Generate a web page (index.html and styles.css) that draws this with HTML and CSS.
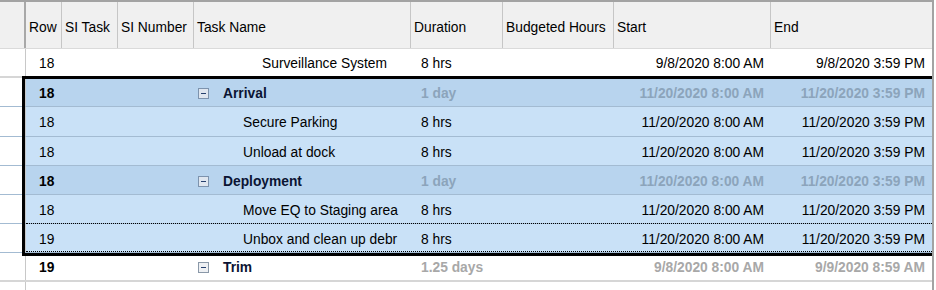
FILE: index.html
```html
<!DOCTYPE html>
<html>
<head>
<meta charset="utf-8">
<link rel="stylesheet" href="styles.css">
</head>
<body>
<div class="grid">
  <div class="hdr">
    <div class="gut"></div>
    <div class="c c-row">Row</div>
    <div class="c c-sit">SI Task</div>
    <div class="c c-sin">SI Number</div>
    <div class="c c-name">Task Name</div>
    <div class="c c-dur">Duration</div>
    <div class="c c-bud">Budgeted Hours</div>
    <div class="c c-start">Start</div>
    <div class="c c-end">End</div>
  </div>

  <div class="row">
    <div class="gut"></div>
    <div class="c c-row num">18</div>
    <div class="c c-sit"></div>
    <div class="c c-sin"></div>
    <div class="c c-name lvl2">Surveillance System</div>
    <div class="c c-dur dur">8 hrs</div>
    <div class="c c-bud"></div>
    <div class="c c-start date">9/8/2020 8:00 AM</div>
    <div class="c c-end date">9/8/2020 3:59 PM</div>
  </div>

  <div class="row sel grp">
    <div class="gut"></div>
    <div class="c c-row num">18</div>
    <div class="c c-sit"></div>
    <div class="c c-sin"></div>
    <div class="c c-name lvl0"><svg class="exp" width="11" height="11" viewBox="0 0 11 11"><rect x="0.5" y="0.5" width="10" height="10" fill="#dfe6ef" stroke="#7d93ad"/><rect x="3" y="5" width="5" height="1" fill="#26406e"/></svg><span>Arrival</span></div>
    <div class="c c-dur dur">1 day</div>
    <div class="c c-bud"></div>
    <div class="c c-start date">11/20/2020 8:00 AM</div>
    <div class="c c-end date">11/20/2020 3:59 PM</div>
  </div>

  <div class="row sel tall">
    <div class="gut"></div>
    <div class="c c-row num">18</div>
    <div class="c c-sit"></div>
    <div class="c c-sin"></div>
    <div class="c c-name lvl1">Secure Parking</div>
    <div class="c c-dur dur">8 hrs</div>
    <div class="c c-bud"></div>
    <div class="c c-start date">11/20/2020 8:00 AM</div>
    <div class="c c-end date">11/20/2020 3:59 PM</div>
  </div>

  <div class="row sel">
    <div class="gut"></div>
    <div class="c c-row num">18</div>
    <div class="c c-sit"></div>
    <div class="c c-sin"></div>
    <div class="c c-name lvl1">Unload at dock</div>
    <div class="c c-dur dur">8 hrs</div>
    <div class="c c-bud"></div>
    <div class="c c-start date">11/20/2020 8:00 AM</div>
    <div class="c c-end date">11/20/2020 3:59 PM</div>
  </div>

  <div class="row sel grp">
    <div class="gut"></div>
    <div class="c c-row num">18</div>
    <div class="c c-sit"></div>
    <div class="c c-sin"></div>
    <div class="c c-name lvl0"><svg class="exp" width="11" height="11" viewBox="0 0 11 11"><rect x="0.5" y="0.5" width="10" height="10" fill="#dfe6ef" stroke="#7d93ad"/><rect x="3" y="5" width="5" height="1" fill="#26406e"/></svg><span>Deployment</span></div>
    <div class="c c-dur dur">1 day</div>
    <div class="c c-bud"></div>
    <div class="c c-start date">11/20/2020 8:00 AM</div>
    <div class="c c-end date">11/20/2020 3:59 PM</div>
  </div>

  <div class="row sel">
    <div class="gut"></div>
    <div class="c c-row num">18</div>
    <div class="c c-sit"></div>
    <div class="c c-sin"></div>
    <div class="c c-name lvl1">Move EQ to Staging area</div>
    <div class="c c-dur dur">8 hrs</div>
    <div class="c c-bud"></div>
    <div class="c c-start date">11/20/2020 8:00 AM</div>
    <div class="c c-end date">11/20/2020 3:59 PM</div>
  </div>

  <div class="row sel focus">
    <div class="gut"></div>
    <div class="c c-row num">19</div>
    <div class="c c-sit"></div>
    <div class="c c-sin"></div>
    <div class="c c-name lvl1">Unbox and clean up debr</div>
    <div class="c c-dur dur">8 hrs</div>
    <div class="c c-bud"></div>
    <div class="c c-start date">11/20/2020 8:00 AM</div>
    <div class="c c-end date">11/20/2020 3:59 PM</div>
  </div>

  <div class="row grp">
    <div class="gut"></div>
    <div class="c c-row num">19</div>
    <div class="c c-sit"></div>
    <div class="c c-sin"></div>
    <div class="c c-name lvl0"><svg class="exp" width="11" height="11" viewBox="0 0 11 11"><rect x="0.5" y="0.5" width="10" height="10" fill="#eef0f3" stroke="#8a98a8"/><rect x="3" y="5" width="5" height="1" fill="#26406e"/></svg><span>Trim</span></div>
    <div class="c c-dur dur">1.25 days</div>
    <div class="c c-bud"></div>
    <div class="c c-start date">9/8/2020 8:00 AM</div>
    <div class="c c-end date">9/9/2020 8:59 AM</div>
  </div>

  <div class="row last">
    <div class="gut"></div>
  </div>

  <div class="selbox"></div>
</div>
</body>
</html>
```

FILE: styles.css
```css
html, body {
  margin: 0;
  padding: 0;
  background: #ffffff;
}

body {
  width: 936px;
  height: 290px;
  overflow: hidden;
  font-family: "Liberation Sans", Arial, sans-serif;
  font-size: 13.8px;
  color: #000;
}

.grid {
  position: relative;
  width: 934px;
  height: 290px;
  box-sizing: border-box;
  border-top: 2px solid #a3a3a3;
  border-right: 2px solid #a3a3a3;
  overflow: hidden;
}

.hdr {
  display: flex;
  height: 47px;
  box-sizing: border-box;
  background: #f0f0f0;
  border-bottom: 1px solid #dadada;
}

.hdr .gut {
  width: 26px;
  border-right: 2px solid #a8a8a8;
  box-sizing: border-box;
  flex: none;
}

.hdr .c {
  display: flex;
  align-items: center;
  padding-left: 3px;
  padding-top: 4px;
  border-right: 1px solid #c6c6c6;
  box-sizing: border-box;
  white-space: nowrap;
  color: #000;
}

.hdr .c-end {
  border-right: none;
}

.c {
  flex: none;
  box-sizing: border-box;
  white-space: nowrap;
  overflow: hidden;
}

.c-row { width: 36px; }
.c-sit { width: 56px; }
.c-sin { width: 76px; }
.c-name { width: 217px; }
.c-dur { width: 92px; }
.c-bud { width: 111px; }
.c-start { width: 157px; }
.c-end { flex: 1 1 auto; }

.row {
  display: flex;
  height: 29px;
  box-sizing: border-box;
  border-bottom: 2px solid #d6d6d6;
}

.row.tall {
  height: 30px;
}

.row .gut {
  width: 26px;
  flex: none;
  box-sizing: border-box;
  border-right: 1px solid #c8c8c8;
  background: #fff;
}

.row .c {
  display: flex;
  align-items: center;
  padding-top: 2px;
}

.row.sel {
  border-bottom: 1px solid #a3bbd2;
}

.row.sel .c {
  background: #c9e1f7;
}

.row.sel.grp .c {
  background: #b8d4ee;
}

.row.last {
  border-bottom: none;
  height: 20px;
}

.num {
  padding-left: 13px;
}

.grp .num {
  font-weight: bold;
}

.lvl0 {
  padding-left: 4px;
  font-weight: bold;
  color: #0b1433;
}

.lvl0 .exp {
  flex: none;
  margin-right: 14px;
}

.lvl1 {
  padding-left: 49px;
}

.lvl2 {
  padding-left: 68px;
}

.dur {
  padding-left: 10px;
}

.date {
  justify-content: flex-end;
  padding-right: 7px;
}

.grp .dur,
.grp .date {
  font-weight: bold;
  color: #a8a8a8;
}

.sel.grp .dur,
.sel.grp .date {
  color: #8ca4bb;
}

.row.focus {
  position: relative;
}

.row.focus::after {
  content: "";
  position: absolute;
  left: 26px;
  right: 0;
  top: -1px;
  bottom: 0;
  border-top: 1px dotted #000;
  border-bottom: 1px dotted #000;
  pointer-events: none;
}

.selbox {
  position: absolute;
  left: 22px;
  top: 74px;
  width: 920px;
  height: 180px;
  box-sizing: border-box;
  border: 3px solid #000;
  pointer-events: none;
}
```
